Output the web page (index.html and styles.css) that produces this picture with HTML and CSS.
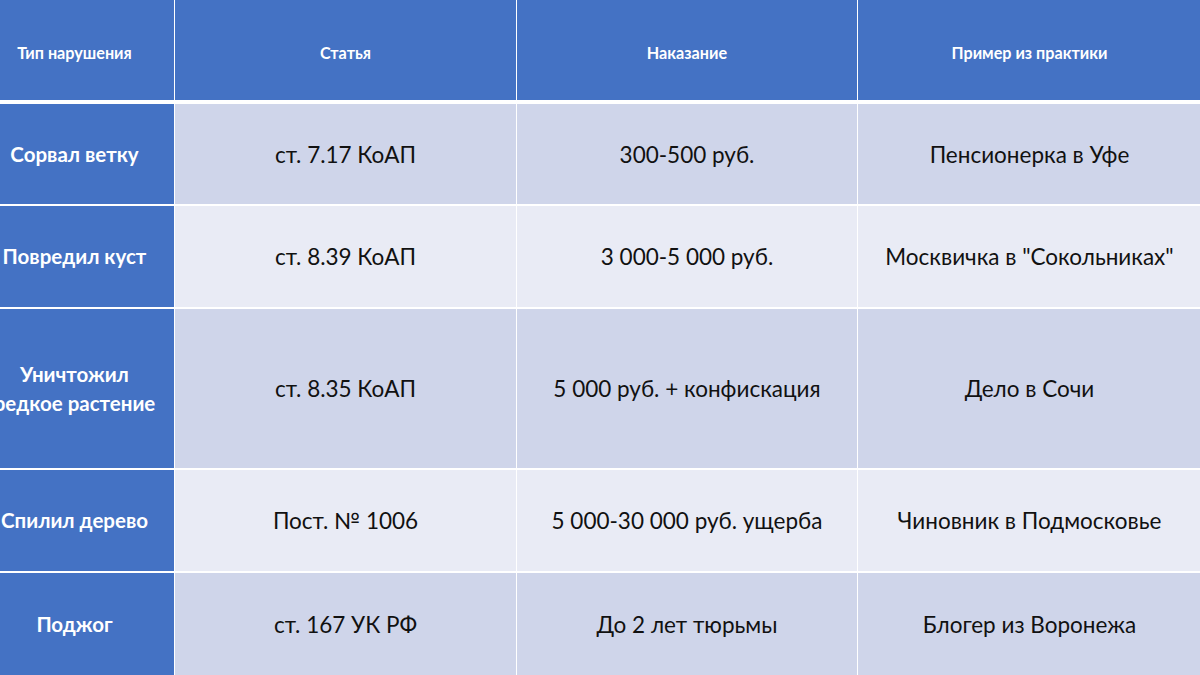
FILE: index.html
```html
<!DOCTYPE html>
<html lang="ru">
<head>
<meta charset="utf-8">
<link rel="stylesheet" href="styles.css">
</head>
<body>
<div class="table">
  <div class="row head">
    <div class="cell first">Тип нарушения</div>
    <div class="cell">Статья</div>
    <div class="cell">Наказание</div>
    <div class="cell">Пример из практики</div>
  </div>
  <div class="row odd r1">
    <div class="cell first">Сорвал ветку</div>
    <div class="cell">ст. 7.17 КоАП</div>
    <div class="cell">300-500 руб.</div>
    <div class="cell">Пенсионерка в Уфе</div>
  </div>
  <div class="row even r2">
    <div class="cell first">Повредил куст</div>
    <div class="cell">ст. 8.39 КоАП</div>
    <div class="cell">3 000-5 000 руб.</div>
    <div class="cell">Москвичка в "Сокольниках"</div>
  </div>
  <div class="row odd r3">
    <div class="cell first">Уничтожил<br>редкое растение</div>
    <div class="cell">ст. 8.35 КоАП</div>
    <div class="cell">5 000 руб. + конфискация</div>
    <div class="cell">Дело в Сочи</div>
  </div>
  <div class="row even r4">
    <div class="cell first">Спилил дерево</div>
    <div class="cell">Пост. № 1006</div>
    <div class="cell">5 000-30 000 руб. ущерба</div>
    <div class="cell">Чиновник в Подмосковье</div>
  </div>
  <div class="row odd r5">
    <div class="cell first">Поджог</div>
    <div class="cell">ст. 167 УК РФ</div>
    <div class="cell">До 2 лет тюрьмы</div>
    <div class="cell">Блогер из Воронежа</div>
  </div>
</div>
</body>
</html>
```

FILE: styles.css
```css
html, body {
  margin: 0;
  padding: 0;
  background: #ffffff;
  overflow: hidden;
  width: 1200px;
  height: 675px;
}

.table {
  margin-left: -25px;
  width: 1227px;
  display: flex;
  flex-direction: column;
  gap: 2px;
  font-family: Lato, "Open Sans", "Liberation Sans", sans-serif;
}

.row {
  display: grid;
  grid-template-columns: 199px 341px 340px 343px;
  column-gap: 1px;
}

.head { height: 100px; margin-bottom: 2px; }
.r1 { height: 100px; }
.r2 { height: 101px; }
.r3 { height: 159px; }
.r4 { height: 101px; }
.r5 { height: 102px; }

.cell {
  display: flex;
  align-items: center;
  justify-content: center;
  text-align: center;
  font-size: 22.5px;
  color: #111111;
  white-space: nowrap;
  line-height: 29px;
}

.head .cell {
  background: #4472c4;
  color: #ffffff;
  font-weight: 700;
  font-size: 16.2px;
  padding-top: 5px;
}

.odd .cell { background: #cfd5ea; }
.even .cell { background: #e9ebf5; }

.row .first {
  background: #4472c4;
  color: #ffffff;
  font-weight: 700;
  font-size: 20.5px;
}

.head .first { font-size: 16.2px; }
```
